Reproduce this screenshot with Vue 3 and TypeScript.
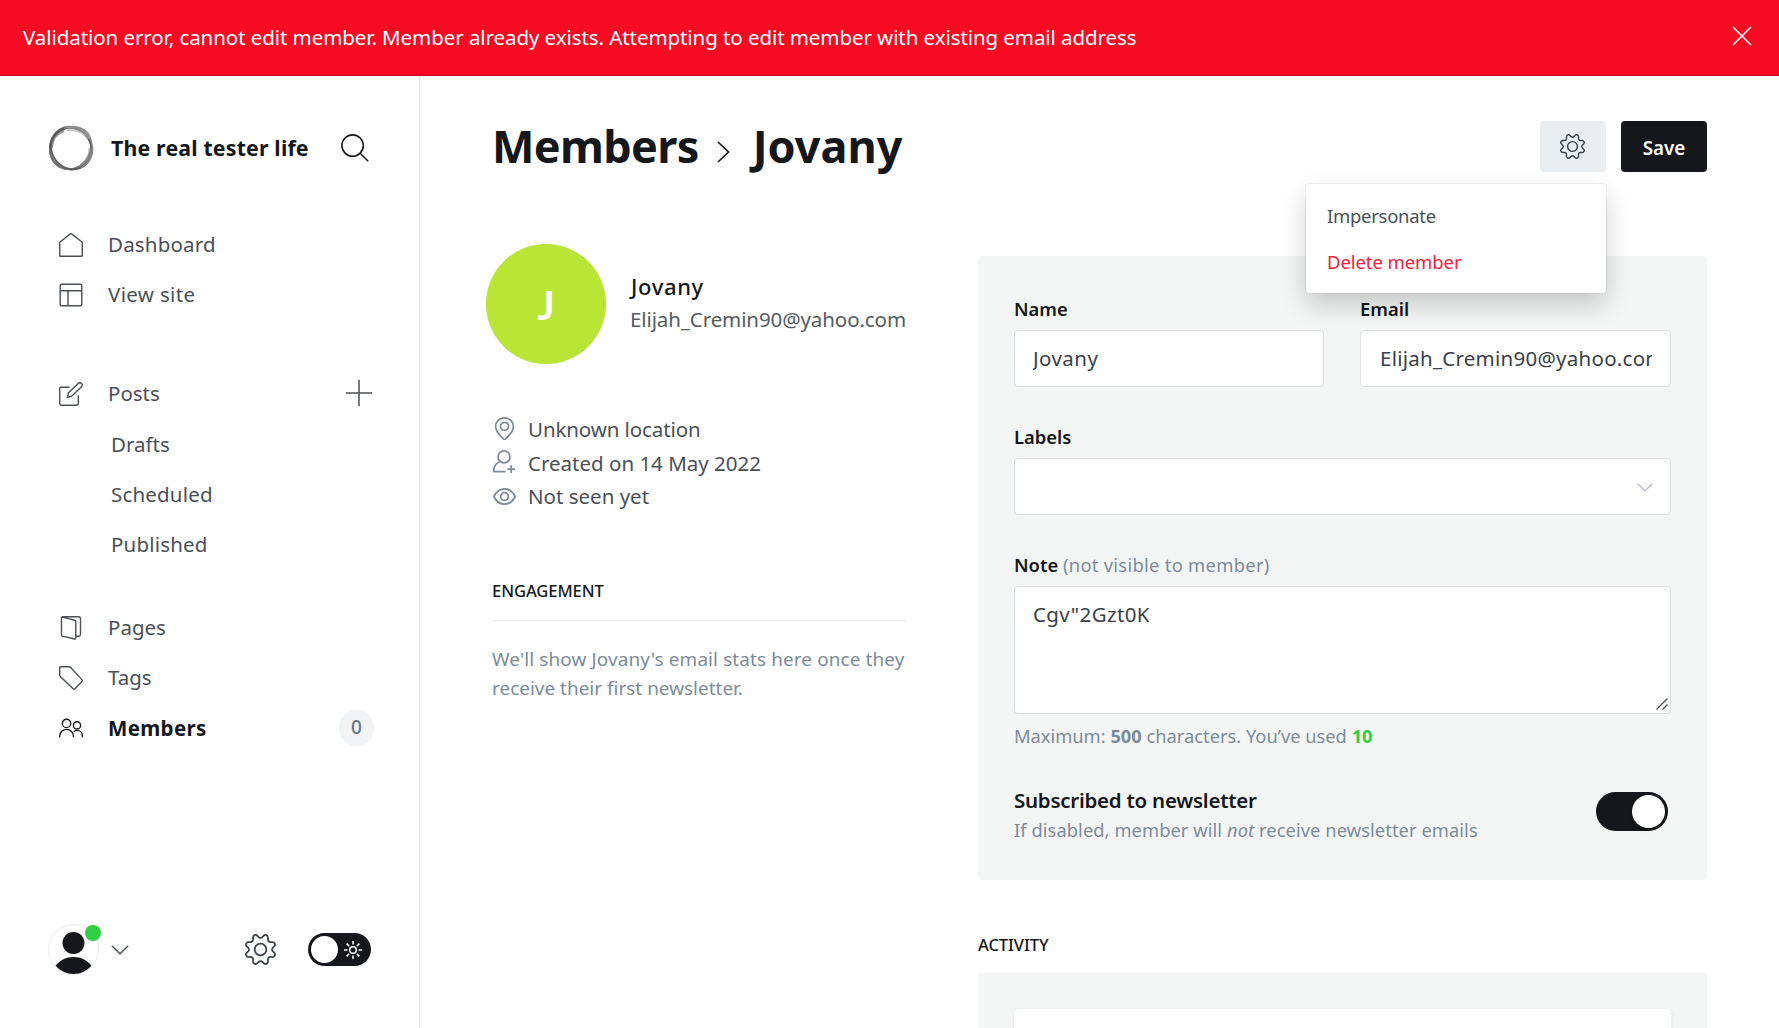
<script setup lang="ts">
import { ref } from 'vue'

interface NavItem {
  label: string
  icon?: string
  sub?: boolean
  active?: boolean
  add?: boolean
  count?: number
  fit?: 'snug' | 'wide'
}

const groups: NavItem[][] = [
  [
    { label: 'Dashboard', icon: 'home' },
    { label: 'View site', icon: 'layout', fit: 'wide' },
  ],
  [
    { label: 'Posts', icon: 'edit', add: true, fit: 'snug' },
    { label: 'Drafts', sub: true, fit: 'snug' },
    { label: 'Scheduled', sub: true },
    { label: 'Published', sub: true },
  ],
  [
    { label: 'Pages', icon: 'pages', fit: 'snug' },
    { label: 'Tags', icon: 'tag', fit: 'snug' },
    { label: 'Members', icon: 'members', active: true, count: 0, fit: 'wide' },
  ],
]

const cog =
  'M10.546 2.438a1.957 1.957 0 0 0 2.908 0L14.4 1.4a1.959 1.959 0 0 1 3.41 1.413l-.071 1.4A1.958 1.958 0 0 0 19.79 6.27l1.4-.071A1.959 1.959 0 0 1 22.6 9.6l-1.04.945a1.959 1.959 0 0 0 0 2.909l1.04.945a1.959 1.959 0 0 1-1.413 3.41l-1.4-.071a1.958 1.958 0 0 0-2.056 2.056l.071 1.4A1.959 1.959 0 0 1 14.4 22.6l-.941-1.04a1.959 1.959 0 0 0-2.908 0L9.606 22.6A1.959 1.959 0 0 1 6.2 21.192l.072-1.4a1.958 1.958 0 0 0-2.056-2.056l-1.4.071A1.958 1.958 0 0 1 1.4 14.4l1.041-.945a1.959 1.959 0 0 0 0-2.909L1.4 9.606A1.958 1.958 0 0 1 2.813 6.2l1.4.071a1.958 1.958 0 0 0 2.058-2.06L6.2 2.81A1.959 1.959 0 0 1 9.606 1.4Z'

const rays = [0, 45, 90, 135, 180, 225, 270, 315]

const name = ref('Jovany')
const email = ref('Elijah_Cremin90@yahoo.com')
const note = ref('Cgv"2Gzt0K')
</script>

<template>
  <div class="app">
    <div class="alert">
      <span class="alert-text">Validation error, cannot edit member. Member already exists. Attempting to edit member with existing email address</span>
      <svg class="alert-close" viewBox="0 0 20 20"><path d="M1 1l18 18M19 1L1 19" /></svg>
    </div>

    <div class="body">
      <nav class="sidebar">
        <header class="brand">
          <svg class="logo" viewBox="0 0 46 46">
            <circle cx="22.5" cy="23.7" r="20.8" stroke="#444" stroke-width="1.5" />
            <ellipse cx="22.5" cy="23" rx="22" ry="19.8" transform="rotate(-52 22.5 23)" stroke="#777" stroke-width="1.4" />
            <ellipse cx="23.2" cy="22.8" rx="22" ry="19.8" transform="rotate(58 23 23)" stroke="#777" stroke-width="1.5" />
            <ellipse cx="23" cy="23.5" rx="19.6" ry="21.4" transform="rotate(-35 23 23)" stroke="#555" stroke-opacity=".75" stroke-width="2" />
            <path d="M16 3.500C23 0 34 1.500 39 7c4 4 4.500 9 5.500 15 1 9-4 18-12 21" stroke="#888" stroke-opacity=".85" stroke-width="1.500" />
            <path d="M19 3.800c9-1 18 3 22 10" stroke="#aaa" stroke-opacity=".6" stroke-width="4.500" />
            <path d="M43 23c0 8-4 14-10 18" stroke="#888" stroke-opacity=".7" stroke-width="4.500" />
            <path d="M2.800 23C3.500 13 9 7 16 5" stroke="#555" stroke-opacity=".6" stroke-width="4" />
          </svg>
          <span class="brand-name">The real tester life</span>
          <svg class="search" viewBox="0 0 28 28"><circle cx="11.6" cy="11.6" r="10.7" /><path d="M19.2 19.2l8 8" /></svg>
        </header>

        <ul v-for="(group, g) in groups" :key="g" class="group">
          <li v-for="item in group" :key="item.label" class="item" :class="{ sub: item.sub, active: item.active }">
            <svg v-if="item.icon" class="nav-icon" viewBox="0 0 24 24">
              <path v-if="item.icon === 'home'" d="M.7 9.3v13.1c0 .5.4.9.9.9h20.8c.5 0 .9-.4.9-.9V9.3L12.6.9a1 1 0 0 0-1.2 0Z" />
              <g v-else-if="item.icon === 'layout'"><rect x="1.2" y="1.2" width="21.6" height="21.6" rx="1.4" /><path d="M1.2 7.7h21.6M9 7.7v15.1" /></g>
              <g v-else-if="item.icon === 'edit'"><path d="M10.7 5.2H2.1c-.8 0-1.4.6-1.4 1.4v15.2c0 .8.6 1.4 1.4 1.4h15.8c.8 0 1.4-.6 1.4-1.4v-8.6" /><path d="M12.700 14.200l-4.200 1 .9-4.300L19.200 1.500a2.300 2.300 0 0 1 3.300 3.300Z" /></g>
              <g v-else-if="item.icon === 'pages'"><path d="M3.6 1.1l12.2 3.1c.6.2 1 .7 1 1.3v16.6c0 .8-.6 1.1-1.2.9L3.4 20.1a1.3 1.3 0 0 1-.9-1.3V2c0-.8.5-1.2 1.1-1.2h16.1c1 0 1.8.7 1.8 1.6v16.2c0 1-.7 1.7-1.7 1.7h-3" /></g>
              <path v-else-if="item.icon === 'tag'" d="M.7 9V1.6C.7 1.1 1.1.7 1.6.7H10c.5 0 1 .2 1.4.6L22.9 13.6c.5.6.5 1.3 0 1.9L16 22.7c-.6.6-1.3.6-1.9 0L1.3 10.4C.9 10 .7 9.500 .7 9Z" />
              <g v-else><circle cx="7.500" cy="7.400" r="4.200" /><path d="M.7 21.200v-.9c0-4 3-6.900 6.900-6.900s6.900 3 6.900 6.900v.9" /><circle cx="18" cy="9.400" r="3.600" /><path d="M14.800 15.700c1-.9 2-1.300 3.300-1.300 3 0 5.200 2.300 5.200 5.400v1.400" /></g>
            </svg>
            <span class="item-label" :class="item.fit">{{ item.label }}</span>
            <svg v-if="item.add" class="plus" viewBox="0 0 28 28"><path d="M14 .8v26.400M.8 14h26.400" /></svg>
            <span v-if="item.count !== undefined" class="count">{{ item.count }}</span>
          </li>
        </ul>

        <footer class="user-bar">
          <div class="user">
            <svg class="user-pic" viewBox="0 0 51 51">
              <circle cx="25.500" cy="25.500" r="25" fill="#fff" stroke="#e9eaeb" />
              <circle cx="25.500" cy="19" r="11" fill="#15171a" stroke="none" />
              <path d="M7.500 41.700C12 36 18 33 25.500 33s13.500 3 18 8.700A25 25 0 0 1 25.500 50 25 25 0 0 1 7.500 41.700Z" fill="#15171a" stroke="none" />
            </svg>
            <i class="online"></i>
          </div>
          <svg class="user-chev" viewBox="0 0 18 10"><path d="M.8.800L9 8.800 17.200.8" /></svg>
          <svg class="cog" viewBox="0 0 24 24"><path :d="cog" /><circle cx="12" cy="12" r="4.500" /></svg>
          <div class="theme">
            <i class="theme-knob"></i>
            <svg class="sun" viewBox="0 0 18 18">
              <circle cx="9" cy="9" r="3.300" />
              <path v-for="r in rays" :key="r" d="M9 0v3.500" :transform="`rotate(${r} 9 9)`" />
            </svg>
          </div>
        </footer>
      </nav>

      <main class="main">
        <header class="head">
          <h1 class="title">
            <span class="t-members">Members</span>
            <svg class="crumb" viewBox="0 0 13 22"><path d="M1 1l10.500 10L1 21" /></svg>
            <span>Jovany</span>
          </h1>
          <div class="actions">
            <div class="gear-btn">
              <svg viewBox="0 0 24 24"><path :d="cog" /><circle cx="12" cy="12" r="4.700" /></svg>
            </div>
            <button class="save">Save</button>
            <div class="menu">
              <div class="menu-item impersonate">Impersonate</div>
              <div class="menu-item danger">Delete member</div>
            </div>
          </div>
        </header>

        <div class="cols">
          <section class="left">
            <div class="profile">
              <div class="avatar">J</div>
              <div class="who">
                <div class="p-name">Jovany</div>
                <div class="p-mail">Elijah_Cremin90@yahoo.com</div>
              </div>
            </div>

            <div class="meta">
              <p>
                <svg viewBox="0 0 24 24"><path d="M12 .9c5.200 0 9.300 4 9.300 9.100 0 4.600-5.600 10.500-8.200 12.800a1.600 1.600 0 0 1-2.200 0C8.300 20.500 2.700 14.600 2.700 10 2.700 4.900 6.800.9 12 .9Z" /><circle cx="12" cy="9.700" r="4.200" /></svg>
                <span class="place">Unknown location</span>
              </p>
              <p>
                <svg viewBox="0 0 24 24"><circle cx="11.500" cy="7.200" r="6.200" /><path d="M7.200 12C3.500 13.800.9 17 .9 21v1.500h12.300M19 16v8M15 20h8" /></svg>
                <span>Created on 14 May 2022</span>
              </p>
              <p>
                <svg class="eye" viewBox="0 0 24 24"><path d="M.9 12C3 7.800 7.200 4 12 4s9 3.800 11.100 8c-2.100 4.200-6.300 8-11.100 8S3 16.200.9 12Z" /><circle cx="12" cy="12" r="4" /></svg>
                <span>Not seen yet</span>
              </p>
            </div>

            <h4 class="section eng">Engagement</h4>
            <div class="rule"></div>
            <p class="hint">We'll show Jovany's email stats here once they<br /><span class="hint-end">receive their first newsletter.</span></p>
          </section>

          <section class="right">
            <div class="card">
              <div class="pair">
                <label class="field"><span class="lbl">Name</span><input v-model="name" class="in-name" /></label>
                <label class="field"><span class="lbl">Email</span><input v-model="email" class="in-email" /></label>
              </div>
              <div class="field gap">
                <span class="lbl">Labels</span>
                <div class="select"><svg viewBox="0 0 16 9"><path d="M.6.600L8 8 15.400.6" /></svg></div>
              </div>
              <div class="field gap">
                <span class="lbl note-lbl">Note <em class="soft">(not visible to member)</em></span>
                <div class="area">
                  <textarea v-model="note"></textarea>
                  <svg class="grip" viewBox="0 0 12 12"><path d="M.5 11.500l11-11M6.500 11.500l5-5" /></svg>
                </div>
                <span class="max">Maximum: <b>500</b> characters. You’ve used <b class="ok">{{ note.length }}</b></span>
              </div>
              <div class="sub-row">
                <div>
                  <div class="s-title">Subscribed to newsletter</div>
                  <div class="s-desc">If disabled, member will <i>not</i> receive newsletter emails</div>
                </div>
                <div class="switch"><i></i></div>
              </div>
            </div>

            <h4 class="section act">Activity</h4>
            <div class="card feed"><div class="feed-inner"></div></div>
          </section>
        </div>
      </main>
    </div>
  </div>
</template>

<style>
body { margin: 0; background: #fff; }
</style>

<style scoped>
* { box-sizing: border-box; }
.app {
  width: 100%;
  height: 1028px;
  overflow: hidden;
  display: flex;
  flex-direction: column;
  background: #fff;
  color: #15171a;
  font-family: "Noto Sans", "Open Sans", sans-serif;
  font-size: 20.5px;
}
svg { display: block; flex: none; fill: none; stroke: currentColor; }
h1, h4, p, ul { margin: 0; padding: 0; }
span, h1, button { white-space: nowrap; }

.alert {
  flex: none;
  height: 76px;
  display: flex;
  align-items: center;
  justify-content: space-between;
  padding: 0 27px 2px 23px;
  background: #f70b23;
  border-bottom: 1px solid #c90a20;
  color: #fff;
}
.alert-text { letter-spacing: -.07px; }
.alert-close { width: 20px; height: 20px; stroke-width: 1.5; margin-bottom: 2px; }

.body { flex: 1; min-height: 0; display: flex; }

.sidebar {
  flex: none;
  width: 420px;
  border-right: 1px solid #e4e7e9;
  padding: 48px 48px 53px;
  display: flex;
  flex-direction: column;
  color: #4a5056;
}
.brand { display: flex; align-items: center; height: 48px; margin-bottom: 47.500px; color: #15171a; }
.logo { width: 46px; height: 46px; }
.brand-name { margin: -1px 0 0 17px; font-size: 21.300px; font-weight: 700; flex: 1; letter-spacing: .18px; }
.search { width: 28px; height: 28px; stroke-width: 1.6; margin: -1px 2px 0 0; }

.group { list-style: none; margin-bottom: 48.700px; }
.group:nth-of-type(2) { margin-bottom: 32.500px; }
.group:nth-of-type(3) { margin-bottom: 0; }
.item { height: 50.300px; display: flex; align-items: center; padding-left: 11px; }
.item.sub { padding-left: 63px; }
.item-label { flex: 1; margin-top: -1px; letter-spacing: .18px; }
.snug { letter-spacing: 0; }
.wide { letter-spacing: .35px; }
.nav-icon { width: 24px; height: 24px; stroke-width: 1.400; margin-right: 25px; }
.active { color: #15171a; }
.active .item-label { font-weight: 700; }
.plus { width: 28px; height: 28px; stroke-width: 1.500; margin: -1px -2px 0 0; }
.count {
  width: 35px;
  height: 36px;
  margin-right: -3px;
  border-radius: 18px;
  background: #f1f3f5;
  color: #667380;
  font-size: 19px;
  font-weight: 500;
  line-height: 35px;
  text-align: center;
}

.user-bar { margin-top: auto; display: flex; align-items: center; height: 51px; }
.user { position: relative; width: 51px; height: 51px; }
.user-pic { width: 51px; height: 51px; }
.online { position: absolute; right: -2px; top: 1px; width: 16px; height: 16px; border-radius: 50%; background: #30cf43; }
.user-chev { width: 18px; height: 10px; margin-left: 12px; stroke-width: 1.400; }
.cog { width: 31px; height: 31px; margin-left: 116px; stroke-width: 1.350; color: #394047; }
.theme { width: 63px; height: 33px; margin-left: 32px; border-radius: 17px; background: #15171a; display: flex; align-items: center; padding: 0 9px 0 3px; justify-content: space-between; color: #fff; }
.theme-knob { width: 27px; height: 27px; border-radius: 50%; background: #fff; }
.sun { width: 18px; height: 18px; stroke-width: 1.500; }

.main { flex: 1; min-width: 0; padding: 45px 72px 0; }
.head { display: flex; justify-content: space-between; height: 51px; margin-bottom: 72px; }
.title { display: flex; align-items: center; height: 49px; font-size: 45px; font-weight: 700; line-height: 49px; }
.t-members { letter-spacing: -.65px; }
.crumb { width: 13px; height: 22px; margin: 12px 23px 0 18px; stroke-width: 1.700; }
.actions { position: relative; display: flex; gap: 15px; }
.gear-btn { width: 66px; height: 51px; border-radius: 4px; background: #ebeef0; display: flex; align-items: center; justify-content: center; color: #394047; }
.gear-btn svg { width: 25px; height: 25px; stroke-width: 1.350; margin-right: 1px; }
.save { width: 86px; border: 0; border-radius: 4px; background: #15171a; color: #fff; font: 600 18.800px "Noto Sans", "Open Sans", sans-serif; padding: 2px 0 0; }
.menu {
  position: absolute;
  z-index: 2;
  top: 63px;
  right: 101px;
  width: 300px;
  height: 109px;
  padding: 8.500px 21px;
  border-radius: 4px;
  background: #fff;
  box-shadow: 0 0 1px 1px rgba(0, 0, 0, .05), 0 11px 26px rgba(0, 0, 0, .2);
  font-size: 18.500px;
  color: #4a5056;
}
.menu-item { height: 46px; line-height: 45px; }
.impersonate { letter-spacing: -.28px; }
.danger { color: #f3213a; letter-spacing: -.08px; }

.cols { display: grid; grid-template-columns: 414px 729px; gap: 72px; }
.profile { display: flex; align-items: center; margin-left: -6px; }
.avatar { flex: none; width: 120px; height: 120px; margin-right: 24px; border-radius: 50%; background: #b8e536; color: #fff; font-family: Lato, "Noto Sans", sans-serif; font-size: 40px; font-weight: 700; line-height: 123px; text-align: center; }
.who { margin-top: -3px; }
.p-name { font-size: 22px; font-weight: 500; line-height: 33px; letter-spacing: .65px; padding-left: 1px; }
.p-mail { line-height: 32px; color: #555b62; white-space: nowrap; letter-spacing: -.1px; }
.meta { margin-top: 49px; color: #4a5056; }
.meta p { display: flex; align-items: center; height: 33.500px; }
.meta svg { width: 23px; height: 23px; margin: -3px 12px 0 1px; stroke-width: 1.850; color: #7c8b9a; }
.meta .eye { margin-top: 0; }
.place { letter-spacing: -.1px; }
.meta span { margin-top: -1px; }
.section { font-weight: 500; text-transform: uppercase; font-size: 16.600px; line-height: 24px; letter-spacing: -.1px; }
.eng { margin-top: 65px; }
.rule { height: 1px; margin-top: 17px; background: #e6e9eb; }
.hint { margin-top: 24.500px; font-size: 18.900px; line-height: 29.200px; color: #7c8b9a; letter-spacing: .13px; white-space: nowrap; }
.hint-end { letter-spacing: .03px; }

.right { padding-top: 12px; }
.card { height: 624px; padding: 36px; border-radius: 4px; background: #f4f6f6; }
.pair { display: grid; grid-template-columns: 310px 311px; gap: 36px; }
.field { display: flex; flex-direction: column; }
.lbl { height: 38px; line-height: 33px; font-size: 18.400px; font-weight: 600; }
.note-lbl { line-height: 34px; }
.soft { font-style: normal; font-weight: 400; color: #7c8b9a; letter-spacing: .27px; }
input, .select, textarea {
  width: 100%;
  height: 57px;
  border: 1px solid #dddfe1;
  border-radius: 4px;
  background: #fff;
  color: #394047;
  font: 20.500px "Noto Sans", "Open Sans", sans-serif;
  padding: 0 18px 1px;
  outline: 0;
}
.in-name { letter-spacing: .45px; }
.in-email { letter-spacing: .25px; padding-left: 19px; }
.gap { margin-top: 33px; }
.select { display: flex; align-items: center; justify-content: flex-end; padding: 2px 17px 0; color: #aab4bf; }
.select svg { width: 16px; height: 9px; stroke-width: 1.200; }
.area { position: relative; }
textarea { height: 128px; padding: 13px 18px; display: block; resize: none; letter-spacing: .35px; }
.grip { position: absolute; right: 3px; bottom: 4px; width: 12px; height: 12px; stroke: #4d4d4d; stroke-width: 1.300; }
.max { margin-top: 8px; height: 30px; line-height: 27px; font-size: 18.300px; color: #7c8b9a; }
.max b { font-weight: 700; }
.max .ok { color: #30cf43; }
.sub-row { display: flex; justify-content: space-between; margin-top: 32px; padding-right: 3px; }
.s-title { line-height: 32px; font-weight: 600; letter-spacing: -.25px; }
.s-desc { line-height: 28px; font-size: 18.300px; color: #7c8b9a; letter-spacing: .08px; }
.switch { width: 72px; height: 39px; margin-top: 8px; border-radius: 20px; background: #15171a; padding: 3px; display: flex; justify-content: flex-end; }
.switch i { width: 33px; height: 33px; border-radius: 50%; background: #fff; box-shadow: 0 3px 4px rgba(0, 0, 0, .06); }
.act { margin-top: 53px; margin-bottom: 16px; }
.feed { height: 200px; }
.feed-inner { height: 200px; border-radius: 4px; background: #fff; box-shadow: 0 2px 5px rgba(0, 0, 0, .07); }
</style>
